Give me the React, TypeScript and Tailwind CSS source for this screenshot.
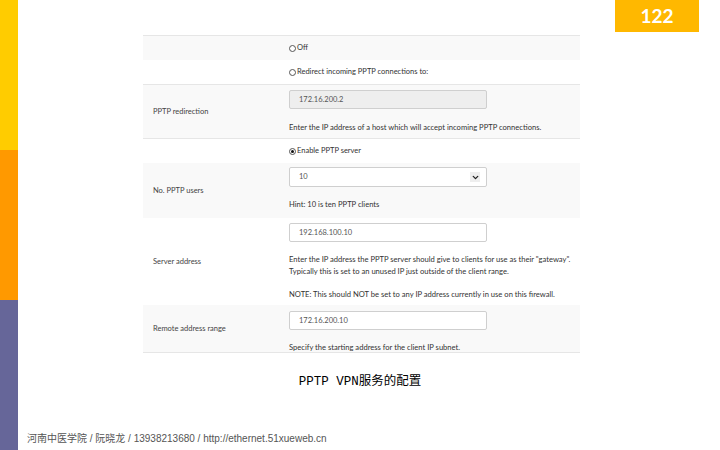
import { ChevronDown } from "lucide-react";

const font = { fontFamily: "Lato, 'Open Sans', sans-serif" };

function Radio({ checked, label }: { checked?: boolean; label: string }) {
  return (
    <div className="flex items-center gap-[1px] text-[7.5px] text-[#333]">
      <span className="w-[7px] h-[7px] rounded-full border border-[#555] bg-white flex items-center justify-center">
        {checked && <span className="w-[3px] h-[3px] rounded-full bg-[#111]" />}
      </span>
      <span>{label}</span>
    </div>
  );
}

function Input({ value, disabled }: { value: string; disabled?: boolean }) {
  return (
    <div
      className={`w-[198px] h-[19px] border border-[#cfcfcf] rounded-[2px] flex items-center pl-[9px] text-[7.5px] text-[#555] ${
        disabled ? "bg-[#eeeeee]" : "bg-white"
      }`}
    >
      {value}
    </div>
  );
}

function Help({ children, mt }: { children: React.ReactNode; mt: string }) {
  return <div className={`${mt} leading-[12px] text-[7.6px] text-[#333]`}>{children}</div>;
}

function Row({
  label,
  gray,
  border,
  h,
  children,
}: {
  label?: string;
  gray?: boolean;
  border?: boolean;
  h: string;
  children: React.ReactNode;
}) {
  return (
    <div
      className={`grid grid-cols-[146px_1fr] ${h} ${gray ? "bg-[#f9f9f9]" : "bg-white"} ${
        border ? "border-t border-[#e6e6e6]" : ""
      }`}
    >
      <div className="flex items-center pl-[10px] text-[7.5px] text-[#444]">{label}</div>
      <div className="flex flex-col">{children}</div>
    </div>
  );
}

export default function App() {
  return (
    <div className="w-[720px] h-[450px] flex bg-white overflow-hidden" style={font}>
      <div className="w-[18px] flex flex-col shrink-0">
        <div className="h-[150px] bg-[#ffcc00]" />
        <div className="h-[150px] bg-[#ff9900]" />
        <div className="h-[150px] bg-[#666699]" />
      </div>

      <div className="flex-1 flex flex-col">
        <div className="h-[32px] flex justify-end pr-[21px]">
          <div className="w-[84px] h-[32px] bg-[#ffb800] flex items-center justify-center text-white font-bold text-[19px]">
            122
          </div>
        </div>

        <div className="ml-[125px] mt-[3px] w-[437px] border-b border-[#e6e6e6]">
          <Row gray border h="h-[25px]">
            <div className="h-full flex items-center">
              <Radio label="Off" />
            </div>
          </Row>
          <Row h="h-[24px]">
            <div className="h-full flex items-center">
              <Radio label="Redirect incoming PPTP connections to:" />
            </div>
          </Row>
          <Row gray border label="PPTP redirection" h="h-[54px]">
            <div className="pt-[5px]">
              <Input value="172.16.200.2" disabled />
            </div>
            <Help mt="mt-[12px]">Enter the IP address of a host which will accept incoming PPTP connections.</Help>
          </Row>
          <Row border h="h-[25px]">
            <div className="h-full flex items-center">
              <Radio checked label="Enable PPTP server" />
            </div>
          </Row>
          <Row gray label="No. PPTP users" h="h-[55px]">
            <div className="pt-[4px]">
              <div className="w-[198px] h-[20px] border border-[#cfcfcf] rounded-[2px] bg-white flex items-center justify-between pl-[9px] pr-[6px] text-[7.5px] text-[#555]">
                <span>10</span>
                <span className="w-[10px] h-[10px] bg-[#eee] flex items-center justify-center">
                  <ChevronDown size={9} strokeWidth={3.5} color="#222" />
                </span>
              </div>
            </div>
            <Help mt="mt-[11px]">Hint: 10 is ten PPTP clients</Help>
          </Row>
          <Row label="Server address" h="h-[87px]">
            <div className="pt-[5px]">
              <Input value="192.168.100.10" />
            </div>
            <Help mt="mt-[11px]">
              Enter the IP address the PPTP server should give to clients for use as their "gateway".
              <br />
              Typically this is set to an unused IP just outside of the client range.
            </Help>
            <Help mt="mt-[11px]">NOTE: This should NOT be set to any IP address currently in use on this firewall.</Help>
          </Row>
          <Row gray label="Remote address range" h="h-[47px]">
            <div className="pt-[6px]">
              <Input value="172.16.200.10" />
            </div>
            <Help mt="mt-[11px]">Specify the starting address for the client IP subnet.</Help>
          </Row>
        </div>

        <div
          className="mt-[20px] pr-[18px] text-center text-[12.5px] text-black"
          style={{ fontFamily: "'Liberation Mono', 'Noto Sans CJK SC', monospace" }}
        >
          PPTP VPN服务的配置
        </div>

        <div className="mt-auto mb-[4px] ml-[9px] text-[10px] text-[#555]" style={{ fontFamily: "'Liberation Sans', 'Noto Sans CJK SC', sans-serif" }}>
          河南中医学院 / 阮晓龙 / 13938213680 / http://ethernet.51xueweb.cn
        </div>
      </div>
    </div>
  );
}
